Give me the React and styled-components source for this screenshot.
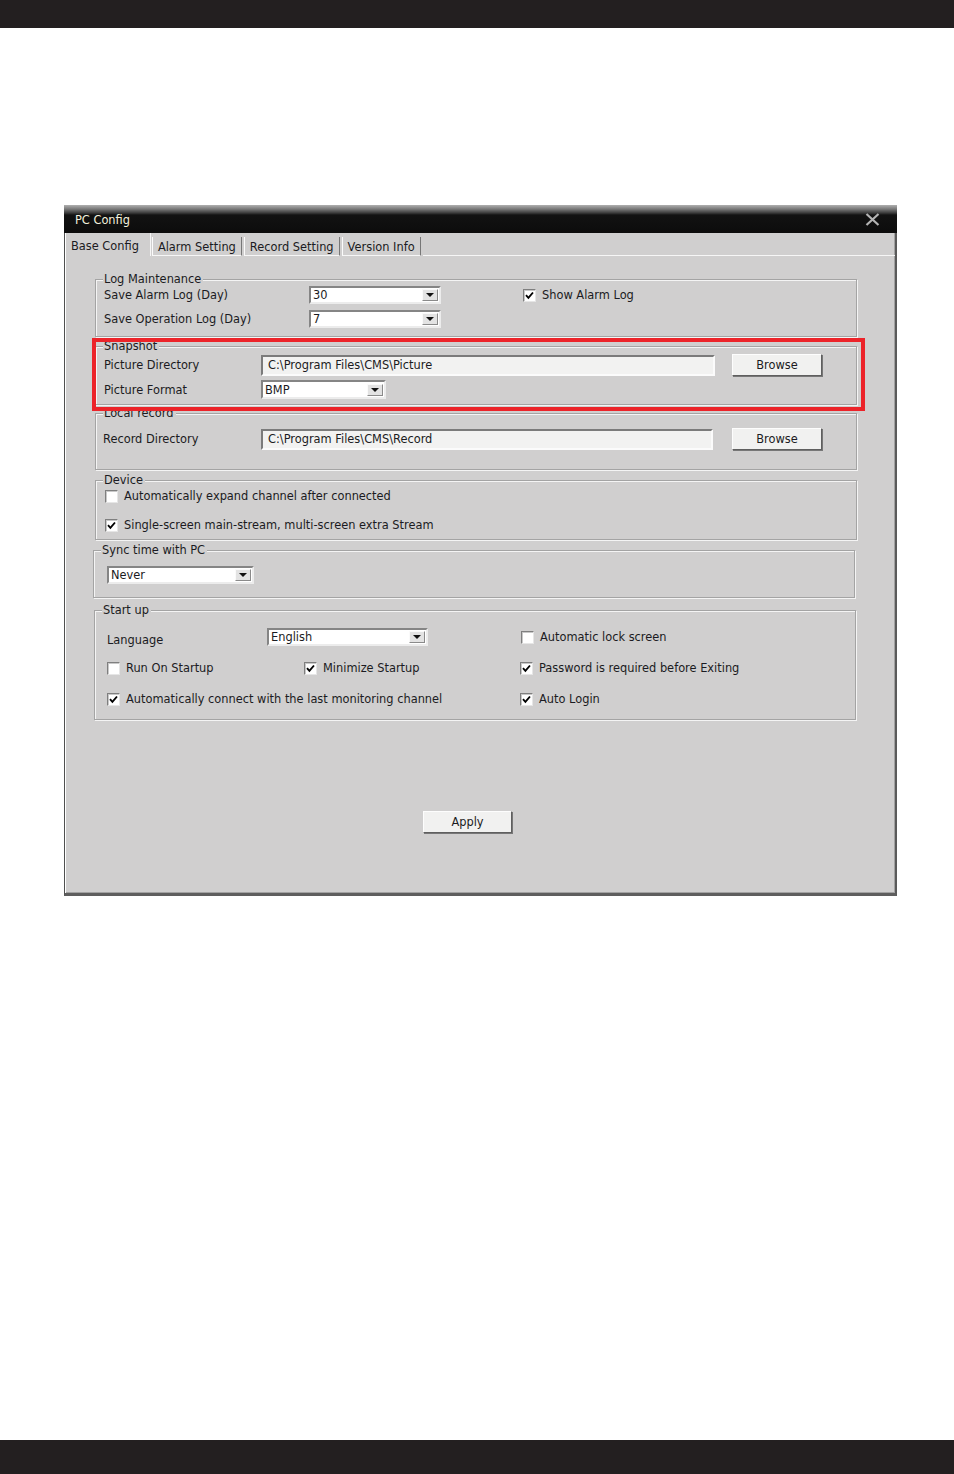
import React from 'react';
import styled, { createGlobalStyle } from 'styled-components';

const GlobalStyle = createGlobalStyle`
  html, body {
    margin: 0;
    padding: 0;
    background: #fff;
  }
  body {
    font-family: "DejaVu Sans", "Liberation Sans", sans-serif;
  }
`;

const Page = styled.div`
  width: 954px;
  height: 1474px;
  display: flex;
  flex-direction: column;
`;

const EdgeBar = styled.div`
  height: ${(p) => p.$h}px;
  background: #231f20;
  flex-shrink: 0;
`;

const Main = styled.div`
  flex: 1;
  padding: 177px 0 0 64px;
`;

const Window = styled.div`
  width: 833px;
  height: 691px;
  display: flex;
  flex-direction: column;
  font-size: 11.4px;
  color: #1b1b22;
`;

const TitleBar = styled.div`
  height: 28px;
  display: flex;
  align-items: center;
  justify-content: space-between;
  padding: 0 17px 0 11px;
  background: linear-gradient(
    to bottom,
    #b0b0b0 0px,
    #7a7a7a 4px,
    #3a3a3a 8px,
    #121212 10px,
    #0c0c0c 100%
  );
`;

const Title = styled.span`
  color: #f4f1de;
  font-size: 11.4px;
  padding-top: 1px;
`;

const Body = styled.div`
  flex: 1;
  display: flex;
  flex-direction: column;
  background: #d0cfcf;
  border-left: 1px solid #4f4f4f;
  border-right: 2px solid #5a5a5a;
  border-bottom: 3px solid #5e5e5e;
  box-shadow: inset 1px 0 0 #ffffff, inset -1px -1px 0 #a2a2a2;
`;

const TabStrip = styled.div`
  height: 23px;
  display: flex;
  align-items: flex-end;
  padding-left: 1px;
`;

const Tab = styled.div`
  height: ${(p) => (p.$active ? 23 : 19)}px;
  display: flex;
  align-items: center;
  padding: ${(p) => (p.$active ? '2px 11px 0 4px' : '2px 5px 0 5px')};
  margin-right: ${(p) => (p.$active ? 1 : 2)}px;
  border-left: 1px solid ${(p) => (p.$active ? 'transparent' : '#fbfbfb')};
  border-right: 1px solid ${(p) => (p.$active ? '#f6f6f6' : '#777')};
  border-bottom: ${(p) => (p.$active ? 'none' : '1px solid #f6f6f6')};
  box-sizing: border-box;
  white-space: nowrap;
`;

const TabFill = styled.div`
  flex: 1;
  align-self: stretch;
  border-bottom: 1px solid #f6f6f6;
`;

const Panel = styled.div`
  flex: 1;
  display: flex;
  flex-direction: column;
  align-items: flex-start;
  padding: 23px 0 0 30px;
`;

const Group = styled.div`
  position: relative;
  box-sizing: border-box;
  width: 762px;
  height: ${(p) => p.$h}px;
  margin-top: ${(p) => p.$mt || 0}px;
  margin-left: ${(p) => p.$ml || 0}px;
  padding: ${(p) => p.$pad};
  border: 1px solid #a4a4a4;
  box-shadow: inset 1px 1px 0 #f4f4f4, 1px 1px 0 #f4f4f4;
  display: flex;
  flex-direction: column;
`;

const Legend = styled.span`
  position: absolute;
  top: -8px;
  left: 7px;
  padding: 0 2px 0 1px;
  line-height: 14px;
  background: #d0cfcf;
`;

const Highlight = styled.div`
  position: absolute;
  z-index: 2;
  left: -4px;
  top: -9px;
  width: 773px;
  height: 73px;
  box-sizing: border-box;
  border: 4px solid #ec2329;
  pointer-events: none;
`;

const Row = styled.div`
  display: flex;
  align-items: center;
  height: ${(p) => p.$h || 18}px;
  margin-top: ${(p) => p.$mt || 0}px;
`;

const Cell = styled.div`
  width: ${(p) => p.$w}px;
  flex-shrink: 0;
  display: flex;
  align-items: center;
  padding-top: ${(p) => p.$pt || 0}px;
  box-sizing: border-box;
`;

const ComboBox = styled.div`
  width: ${(p) => p.$w}px;
  height: ${(p) => p.$h || 18}px;
  box-sizing: border-box;
  display: flex;
  align-items: center;
  justify-content: space-between;
  background: #fff;
  border: 2px solid;
  border-color: #858585 #ececec #ececec #858585;
  padding: 0 1px 0 2px;
  flex-shrink: 0;
`;

const DropButton = styled.div`
  width: 16px;
  height: 12px;
  box-sizing: border-box;
  background: #e3e3e3;
  border: 1px solid;
  border-color: #fafafa #8a8a8a #8a8a8a #fafafa;
  display: flex;
  align-items: center;
  justify-content: center;
`;

const Arrow = styled.span`
  width: 0;
  height: 0;
  border-left: 4px solid transparent;
  border-right: 4px solid transparent;
  border-top: 4px solid #111;
`;

const PathInput = styled.div`
  width: ${(p) => p.$w}px;
  height: 21px;
  box-sizing: border-box;
  background: #f2f2f1;
  border: 2px solid;
  border-color: #7b7b7b #fbfbfb #fbfbfb #7b7b7b;
  padding-left: 5px;
  display: flex;
  align-items: center;
  flex-shrink: 0;
`;

const Button = styled.div`
  width: ${(p) => p.$w || 90}px;
  height: 22px;
  margin-left: ${(p) => p.$ml || 0}px;
  margin-top: ${(p) => p.$mt || 0}px;
  box-sizing: border-box;
  background: #f1f1f0;
  border: 1px solid;
  border-color: #fdfdfd #5f5f5f #5f5f5f #fdfdfd;
  box-shadow: 1px 1px 0 #777;
  display: flex;
  align-items: center;
  justify-content: center;
  flex-shrink: 0;
`;

const Check = styled.span`
  width: 13px;
  height: 13px;
  box-sizing: border-box;
  background: #fff;
  border: 1px solid;
  border-color: #7f7f7f #e6e6e6 #e6e6e6 #7f7f7f;
  box-shadow: inset 1px 1px 0 #c8c8c8;
  display: inline-flex;
  align-items: center;
  justify-content: center;
  margin-right: 6px;
  flex-shrink: 0;
`;

const CheckLabel = styled.label`
  display: flex;
  align-items: center;
  white-space: nowrap;
  margin-left: ${(p) => p.$ml || 0}px;
`;

const Tick = () => (
  <svg width="9" height="9" viewBox="0 0 9 9">
    <path d="M1 4.2 L3.4 6.8 L8 1.5" fill="none" stroke="#000" strokeWidth="1.9" />
  </svg>
);

const CheckItem = ({ checked, children, ml }) => (
  <CheckLabel $ml={ml}>
    <Check>{checked && <Tick />}</Check>
    {children}
  </CheckLabel>
);

const Combo = ({ w, h, value }) => (
  <ComboBox $w={w} $h={h}>
    <span>{value}</span>
    <DropButton>
      <Arrow />
    </DropButton>
  </ComboBox>
);

const CloseIcon = () => (
  <svg width="15" height="13" viewBox="0 0 15 13">
    <path d="M1.5 1 L13.5 12 M13.5 1 L1.5 12" stroke="#b4b4b4" strokeWidth="2.2" />
  </svg>
);

export default function App() {
  return (
    <Page>
      <GlobalStyle />
      <EdgeBar $h={28} />
      <Main>
        <Window>
          <TitleBar>
            <Title>PC Config</Title>
            <CloseIcon />
          </TitleBar>
          <Body>
            <TabStrip>
              <Tab $active>Base Config</Tab>
              <Tab>Alarm Setting</Tab>
              <Tab>Record Setting</Tab>
              <Tab>Version Info</Tab>
              <TabFill />
            </TabStrip>
            <Panel>
              <Group $h={58} $pad="6px 0 0 8px">
                <Legend>Log Maintenance</Legend>
                <Row>
                  <Cell $w={205}>Save Alarm Log (Day)</Cell>
                  <Combo w={132} value="30" />
                  <CheckItem checked ml={82}>Show Alarm Log</CheckItem>
                </Row>
                <Row $mt={6}>
                  <Cell $w={205}>Save Operation Log (Day)</Cell>
                  <Combo w={132} value="7" />
                </Row>
              </Group>

              <Group $h={59} $mt={9} $pad="7px 0 0 8px">
                <Legend>Snapshot</Legend>
                <Highlight />
                <Row $h={22}>
                  <Cell $w={157}>Picture Directory</Cell>
                  <PathInput $w={454}>C:\Program Files\CMS\Picture</PathInput>
                  <Button $ml={17}>Browse</Button>
                </Row>
                <Row $h={19} $mt={4}>
                  <Cell $w={157}>Picture Format</Cell>
                  <Combo w={125} h={19} value="BMP" />
                </Row>
              </Group>

              <Group $h={57} $mt={8} $pad="14px 0 0 7px">
                <Legend>Local record</Legend>
                <Row $h={22}>
                  <Cell $w={158}>Record Directory</Cell>
                  <PathInput $w={452}>C:\Program Files\CMS\Record</PathInput>
                  <Button $ml={19}>Browse</Button>
                </Row>
              </Group>

              <Group $h={60} $mt={10} $pad="7px 0 0 9px">
                <Legend>Device</Legend>
                <Row $h={16}>
                  <CheckItem>Automatically expand channel after connected</CheckItem>
                </Row>
                <Row $h={16} $mt={13}>
                  <CheckItem checked>Single-screen main-stream, multi-screen extra Stream</CheckItem>
                </Row>
              </Group>

              <Group $h={48} $mt={10} $ml={-2} $pad="15px 0 0 13px">
                <Legend>Sync time with PC</Legend>
                <Row>
                  <Combo w={147} value="Never" />
                </Row>
              </Group>

              <Group $h={110} $mt={12} $ml={-1} $pad="17px 0 0 12px">
                <Legend>Start up</Legend>
                <Row>
                  <Cell $w={160} $pt={5}>Language</Cell>
                  <Combo w={161} value="English" />
                  <CheckItem ml={93}>Automatic lock screen</CheckItem>
                </Row>
                <Row $h={16} $mt={14}>
                  <Cell $w={197}>
                    <CheckItem>Run On Startup</CheckItem>
                  </Cell>
                  <Cell $w={216}>
                    <CheckItem checked>Minimize Startup</CheckItem>
                  </Cell>
                  <CheckItem checked>Password is required before Exiting</CheckItem>
                </Row>
                <Row $h={16} $mt={15}>
                  <Cell $w={413}>
                    <CheckItem checked>Automatically connect with the last monitoring channel</CheckItem>
                  </Cell>
                  <CheckItem checked>Auto Login</CheckItem>
                </Row>
              </Group>

              <Button $w={89} $ml={328} $mt={91}>Apply</Button>
            </Panel>
          </Body>
        </Window>
      </Main>
      <EdgeBar $h={34} />
    </Page>
  );
}
